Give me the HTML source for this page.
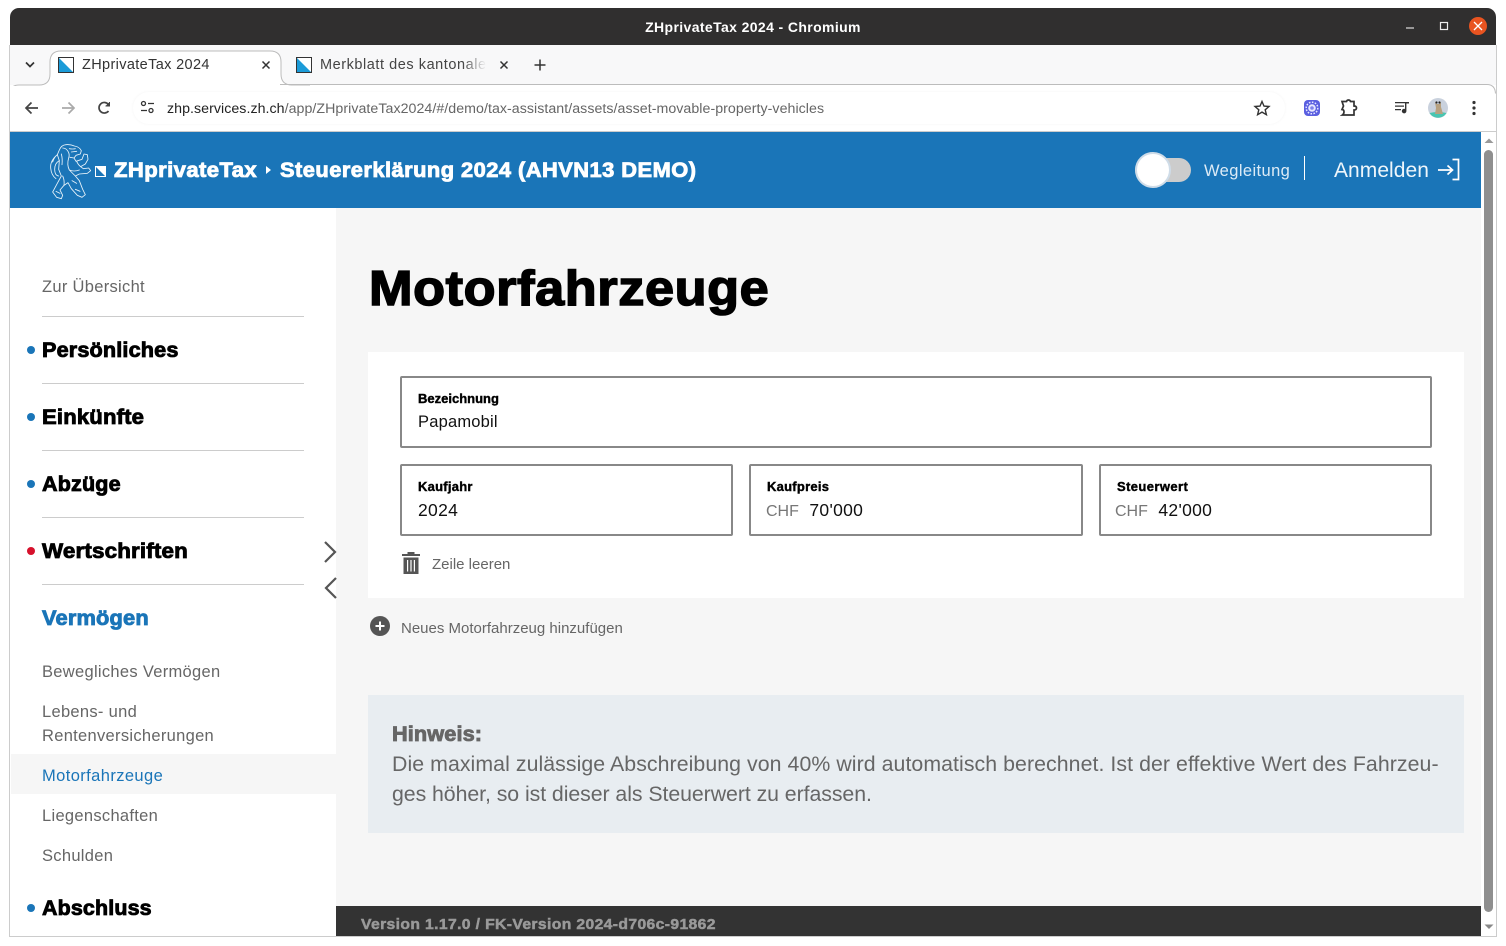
<!DOCTYPE html>
<html><head><meta charset="utf-8"><style>
html,body{margin:0;padding:0;background:#fff;width:1506px;height:946px;overflow:hidden}
*{box-sizing:border-box}
body{font-family:"Liberation Sans",sans-serif;position:relative}
.a{position:absolute;white-space:nowrap}
.h{font-weight:700;-webkit-text-stroke:.85px currentColor;color:#000;transform-origin:0 50%}
.n{font-size:16.5px;color:#666;line-height:24px;letter-spacing:.3px}
.hr{position:absolute;left:42px;width:262px;height:1px;background:#ccc}
.dot{position:absolute;left:27px;width:8px;height:8px;border-radius:50%;background:#1a75b8}
.box{position:absolute;background:#fff;border:2px solid #888;border-radius:2px}
.lb{position:absolute;font-size:13px;font-weight:700;color:#000;-webkit-text-stroke:.4px #000;white-space:nowrap;letter-spacing:.25px}
.v{position:absolute;font-size:17.5px;color:#111;white-space:nowrap;letter-spacing:.3px}
.c{color:#777;margin-right:10.500px;font-size:16px;letter-spacing:0}
.side{font-size:21px;line-height:26px;letter-spacing:.15px}
</style></head><body>
<div class="a" style="left:10px;top:8px;width:1486px;height:37px;background:#302f2f;border-radius:9px 9px 0 0"></div>
<div class="a" style="left:0;width:1506px;top:27px;text-align:center;transform:translateY(-50%);color:#fff;font-weight:700;font-size:14px;letter-spacing:.38px">ZHprivateTax 2024 - Chromium</div>
<svg class="a" style="left:1400px;top:12px" width="90" height="30" fill="none" stroke="#fff"><path d="M6 16h8" stroke="#ddd" stroke-width="1.2"/><rect x="40.5" y="10.500" width="7" height="7" stroke="#eee" stroke-width="1.2"/><circle cx="78" cy="14" r="9" fill="#e95420" stroke="none"/><path d="M74 10l8 8M82 10l-8 8" stroke-width="1.3"/></svg>

<div class="a" style="left:10px;top:45px;width:1486px;height:40px;background:#f8f8f9"></div>
<div class="a" style="left:10px;top:85px;width:1486px;height:47px;background:#fff;border-bottom:1px solid #ccc;border-radius:9px 9px 0 0"></div>
<svg class="a" style="left:10px;top:45px" width="300" height="41" fill="none"><path d="M0 48V49q0-9 9-9h20q11 0 11-11V17q0-11 11-11h209q11 0 11 11v12q0 11 11 11h18" fill="#fff" stroke="#bcbcbc"/><path d="M16 17.500l4 4 4-4" stroke="#333" stroke-width="1.700"/></svg>
<svg class="a" style="left:58px;top:57px" width="17" height="17"><rect width="16" height="16" fill="#1b9bd8"/><path d="M0 0h16v16z" fill="#fff"/><rect x=".5" y=".5" width="15" height="15" fill="none" stroke="#333"/></svg>
<div class="a" style="left:82px;top:57px;font-size:14.5px;line-height:17px;color:#333;letter-spacing:.36px">ZHprivateTax 2024</div>
<svg class="a" style="left:260px;top:59px" width="12" height="12" stroke="#333" stroke-width="1.500"><path d="M2.500 2.500l7 7M9.500 2.500l-7 7"/></svg>
<svg class="a" style="left:296px;top:57px" width="17" height="17"><rect width="16" height="16" fill="#1b9bd8"/><path d="M0 0h16v16z" fill="#fff"/><rect x=".5" y=".5" width="15" height="15" fill="none" stroke="#333"/></svg>
<div class="a" style="left:320px;top:57px;width:166px;overflow:hidden;font-size:14.5px;line-height:17px;color:#444;letter-spacing:.55px;-webkit-mask-image:linear-gradient(90deg,#000 86%,transparent)">Merkblatt des kantonalen</div>
<svg class="a" style="left:498px;top:59px" width="12" height="12" stroke="#333" stroke-width="1.500"><path d="M2.500 2.500l7 7M9.500 2.500l-7 7"/></svg>
<svg class="a" style="left:533px;top:58px" width="14" height="14" stroke="#333" stroke-width="1.500"><path d="M7 1.500v11M1.500 7h11"/></svg>

<svg class="a" style="left:1470px;top:84px" width="27" height="14" fill="none"><path d="M14 .5h3q8 0 8.500 9" stroke="#bcbcbc"/></svg>
<div class="a" style="left:280px;top:84px;width:1205px;height:1px;background:#bcbcbc"></div>
<div class="a" style="left:133px;top:92px;width:1152px;height:32px;border-radius:16px;background:#fff;box-shadow:0 0 3px #f4f4f4"></div>
<svg class="a" style="left:22px;top:98px" width="100" height="20" fill="none" stroke="#444" stroke-width="1.700"><path d="M16 10H4M9.500 4.500L4 10l5.500 5.500"/><path d="M40 10h12M46.500 4.500L52 10l-5.500 5.500" stroke="#aaa"/><path d="M86.500 6.500A5.300 5.300 0 1 0 86.500 13"/><path d="M87.500 4v4h-4" fill="#444" stroke-width="1"/></svg>
<svg class="a" style="left:140px;top:100px" width="15" height="15" fill="none" stroke="#333" stroke-width="1.300"><circle cx="3.500" cy="3.500" r="2"/><path d="M8 3.500h6M1 10.500h6"/><circle cx="11" cy="10.500" r="2"/></svg>
<div class="a" style="left:167px;top:101px;font-size:14.200px;color:#666;letter-spacing:.05px"><span style="color:#222">zhp.services.zh.ch</span>/app/ZHprivateTax2024/#/demo/tax-assistant/assets/asset-movable-property-vehicles</div>
<svg class="a" style="left:1253px;top:99px" width="18" height="18" fill="none" stroke="#333" stroke-width="1.400"><path d="M9 2.500l2 4.600 5 .4-3.800 3.300 1.200 4.900L9 13.100l-4.400 2.600 1.200-4.900L2 7.500l5-.4z"/></svg>
<svg class="a" style="left:1304px;top:100px" width="16" height="16"><rect width="16" height="16" rx="4" fill="#5a5fe0"/><circle cx="8" cy="8" r="5.800" fill="none" stroke="#e6e7ff" stroke-width="1.500" stroke-dasharray="1.600 1.400"/><circle cx="8" cy="8" r="3.800" fill="#e6e7ff"/><circle cx="8" cy="8" r="1.800" fill="#7f83ea"/></svg>
<svg class="a" style="left:1340px;top:99px" width="18" height="18" fill="none" stroke="#333" stroke-width="1.700"><path d="M2 2.500h4.500q.5-1.500 2-1.500t2 1.500H14v4.500q2.500 0 2.500 2t-2.500 2v5H2.500q1.500-1 1.500-3.200T2 10.500L3.500 7z"/></svg>
<svg class="a" style="left:1394px;top:100px" width="16" height="15" fill="#333"><path d="M1 2h10v1.300H1zM1 5.500h9v1.300H1zM1 9h6v1.300H1z"/><path d="M11 2h4v1.500h-2.600v7.500a2.300 2.300 0 1 1-1.400-2z"/></svg>
<svg class="a" style="left:1428px;top:98px" width="20" height="20"><circle cx="10" cy="10" r="10" fill="#c9d1dd"/><path d="M1.500 15q8.500-2 17 0a10 10 0 0 1-17 0z" fill="#49c5b1"/><path d="M7 4l1.500 2h3L13 4v5l2 7H7l1-6z" fill="#b7a180"/><circle cx="8.500" cy="4.500" r="1.100" fill="#222"/><circle cx="11.500" cy="4.500" r="1.100" fill="#222"/></svg>
<svg class="a" style="left:1472px;top:100px" width="4" height="16" fill="#333"><circle cx="2" cy="2.500" r="1.600"/><circle cx="2" cy="8" r="1.600"/><circle cx="2" cy="13.500" r="1.600"/></svg>

<div class="a" style="left:10px;top:132px;width:1471px;height:76px;background:#1a75b8"></div>
<svg class="a" style="left:46px;top:140px" width="64" height="62" viewBox="0 0 192 186" fill="none" stroke="#e8f3fa" stroke-width="2.600" stroke-linejoin="round" stroke-linecap="round">
<path d="M40 30Q46 15 60 14T85 18Q100 20 106 32L103 42 90 46 84 54 90 64 108 58 114 42 124 44 126 58 118 72 104 80 112 86 128 84 134 92 124 100 100 102 88 108 100 122 110 148 118 164 108 172 94 166 76 146 66 128 54 136 42 150 50 166 46 176 32 172 20 156 34 130 46 108 38 88 40 62 34 44z"/>
<path d="M34 44Q12 62 14 84T30 116M40 62Q26 70 26 88T38 108M34 44Q24 52 20 66"/>
<path d="M50 24Q60 24 66 34T68 54Q62 74 70 90L88 108M70 26Q80 28 88 26M76 36L92 34M84 54L72 52M92 64Q96 74 104 80M70 90Q84 96 100 90M54 136Q56 120 50 108M78 122L92 130M88 148L102 154M30 154L42 160M46 42Q50 56 48 74"/>
</svg>
<svg class="a" style="left:95px;top:166px" width="11" height="11"><path d="M.5.500h10v10H.500z" fill="#1a75b8" stroke="#fff"/><path d="M0 0h11v11z" fill="#fff"/></svg>
<div class="a h" style="left:114px;top:158px;font-size:21px;color:#fff;letter-spacing:.4px;line-height:26px;transform:scaleX(1.05)">ZHprivateTax</div>
<svg class="a" style="left:265px;top:165px" width="7" height="10" fill="#fff"><path d="M1 1l5 4-5 4z"/></svg>
<div class="a h" style="left:280px;top:158px;font-size:21px;color:#fff;letter-spacing:.45px;line-height:26px;transform:scaleX(1.04)">Steuererklärung 2024 (AHVN13 DEMO)</div>
<div class="a" style="left:1135px;top:158px;width:56px;height:24px;border-radius:12px;background:#ccc"></div>
<div class="a" style="left:1135px;top:152px;width:36px;height:36px;border-radius:50%;background:#fff;border:2px solid #cfdce8"></div>
<div class="a" style="left:1204px;top:162px;font-size:16.5px;color:#dcebf6;letter-spacing:.4px">Wegleitung</div>
<div class="a" style="left:1304px;top:156px;width:1px;height:24px;background:#fff"></div>
<div class="a" style="left:1334px;top:159px;font-size:21px;color:#eef6fb;letter-spacing:.05px">Anmelden</div>
<svg class="a" style="left:1438px;top:158px" width="22" height="23" fill="none" stroke="#fff" stroke-width="1.700"><path d="M0 12h14M9.500 7.500l5 4.500-5 4.500"/><path d="M14.500 1.500h6v20h-6"/></svg>

<div class="a" style="left:10px;top:208px;width:326px;height:729px;background:#fff"></div>
<div class="a" style="left:336px;top:208px;width:1145px;height:698px;background:#f6f6f6"></div>
<div class="a n" style="left:42px;top:275px">Zur Übersicht</div>
<div class="hr" style="top:316px"></div>
<div class="dot" style="top:346px"></div><div class="a h side" style="left:42px;top:338px;transform:scaleX(1.03)">Persönliches</div>
<div class="hr" style="top:383px"></div>
<div class="dot" style="top:413px"></div><div class="a h side" style="left:42px;top:405px;transform:scaleX(1.052)">Einkünfte</div>
<div class="hr" style="top:450px"></div>
<div class="dot" style="top:480px"></div><div class="a h side" style="left:42px;top:472px;transform:scaleX(1.026)">Abzüge</div>
<div class="hr" style="top:517px"></div>
<div class="dot" style="top:547px;background:#d6112c"></div><div class="a h side" style="left:42px;top:539px;transform:scaleX(1.066)">Wertschriften</div>
<div class="hr" style="top:584px"></div>
<div class="a h side" style="left:42px;top:606px;color:#1a75b8;transform:scaleX(1.04)">Vermögen</div>
<div class="a n" style="left:42px;top:660px">Bewegliches Vermögen</div>
<div class="a n" style="left:42px;top:700px">Lebens- und</div>
<div class="a n" style="left:42px;top:724px">Rentenversicherungen</div>
<div class="a" style="left:11px;top:754px;width:325px;height:40px;background:#f6f6f6"></div>
<div class="a n" style="left:42px;top:764px;color:#1a75b8;letter-spacing:.4px">Motorfahrzeuge</div>
<div class="a n" style="left:42px;top:804px">Liegenschaften</div>
<div class="a n" style="left:42px;top:844px">Schulden</div>
<div class="dot" style="top:904px"></div><div class="a h side" style="left:42px;top:896px;transform:scaleX(1.02)">Abschluss</div>
<svg class="a" style="left:321px;top:539px" width="18" height="61" fill="none" stroke="#555" stroke-width="2.200"><path d="M4 3l10 10L4 23"/><path d="M15 39L5 49l10 10"/></svg>

<div class="a h" style="left:369px;top:259px;font-size:49px;line-height:60px;letter-spacing:.55px;-webkit-text-stroke:1.500px #000;transform:scaleX(1.067)">Motorfahrzeuge</div>
<div class="a" style="left:368px;top:352px;width:1096px;height:246px;background:#fff"></div>
<div class="box" style="left:400px;top:376px;width:1032px;height:72px"></div>
<div class="lb" style="left:418px;top:391px;letter-spacing:0">Bezeichnung</div><div class="v" style="left:418px;top:413px;font-size:16.5px;letter-spacing:.2px">Papamobil</div>
<div class="box" style="left:400px;top:464px;width:333px;height:72px"></div>
<div class="lb" style="left:418px;top:479px">Kaufjahr</div><div class="v" style="left:418px;top:500px">2024</div>
<div class="box" style="left:749px;top:464px;width:334px;height:72px"></div>
<div class="lb" style="left:767px;top:479px">Kaufpreis</div><div class="v" style="left:766px;top:500px"><span class="c">CHF</span>70'000</div>
<div class="box" style="left:1099px;top:464px;width:333px;height:72px"></div>
<div class="lb" style="left:1117px;top:479px;letter-spacing:.4px">Steuerwert</div><div class="v" style="left:1115px;top:500px"><span class="c">CHF</span>42'000</div>
<svg class="a" style="left:401px;top:552px" width="20" height="22" fill="#555"><path d="M6.500 0h7v2h5.500v2H1V2h5.500z"/><path d="M2.500 5.500h15V22h-15zM6 8v11.500h1.200V8zM9.400 8v11.500h1.200V8zM12.800 8v11.500h1.200V8z" fill-rule="evenodd"/></svg>
<div class="a" style="left:432px;top:556px;font-size:15px;color:#666">Zeile leeren</div>
<svg class="a" style="left:370px;top:616px" width="20" height="20"><circle cx="10" cy="10" r="10" fill="#555"/><path d="M10 5.500v9M5.500 10h9" stroke="#fff" stroke-width="2"/></svg>
<div class="a" style="left:401px;top:620px;font-size:15px;color:#666">Neues Motorfahrzeug hinzufügen</div>

<div class="a" style="left:368px;top:695px;width:1096px;height:138px;background:#e8edf1"></div>
<div class="a h" style="left:392px;top:722px;font-size:21px;line-height:26px;color:#666;letter-spacing:.1px;transform:scaleX(1.034)">Hinweis:</div>
<div class="a" style="left:392px;top:749px;font-size:21.300px;line-height:30px;color:#666;letter-spacing:.065px">Die maximal zulässige Abschreibung von 40% wird automatisch berechnet. Ist der effektive Wert des Fahrzeu-<br><span style="letter-spacing:-.06px">ges höher, so ist dieser als Steuerwert zu erfassen.</span></div>

<div class="a" style="left:336px;top:906px;width:1145px;height:31px;background:#333"></div>
<div class="a h" style="left:361px;top:915px;font-size:15px;line-height:20px;color:#999;letter-spacing:.35px;-webkit-text-stroke:.5px #999;transform:scaleX(1.047)">Version 1.17.0 / FK-Version 2024-d706c-91862</div>

<div class="a" style="left:1481px;top:133px;width:15px;height:804px;background:#fff"></div>
<div class="a" style="left:1496px;top:45px;width:1px;height:892px;background:#ccc"></div>
<div class="a" style="left:9px;top:45px;width:1px;height:892px;background:#ccc"></div>
<svg class="a" style="left:1483px;top:137px" width="12" height="8" fill="#999"><path d="M6 1.500l4.500 4.500h-9z"/></svg>
<div class="a" style="left:1484px;top:150px;width:9px;height:762px;border-radius:5px;background:#8f8f8f"></div>
<svg class="a" style="left:1483px;top:923px" width="12" height="8" fill="#888"><path d="M1.500 1.500h9L6 6z"/></svg>
<div class="a" style="left:9px;top:936px;width:1488px;height:1px;background:#ccc"></div>
</body></html>
